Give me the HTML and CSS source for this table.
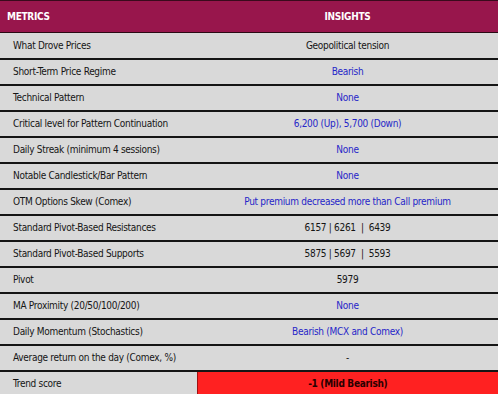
FILE: index.html
```html
<!DOCTYPE html>
<html>
<head>
<meta charset="utf-8">
<link rel="stylesheet" href="styles.css">
</head>
<body>
<table class="metrics">
  <thead>
    <tr><th class="label">METRICS</th><th class="value">INSIGHTS</th></tr>
  </thead>
  <tbody>
    <tr><td class="label">What Drove Prices</td><td class="value">Geopolitical tension</td></tr>
    <tr><td class="label">Short-Term Price Regime</td><td class="value blue">Bearish</td></tr>
    <tr><td class="label">Technical Pattern</td><td class="value blue">None</td></tr>
    <tr><td class="label">Critical level for Pattern Continuation</td><td class="value blue">6,200 (Up), 5,700 (Down)</td></tr>
    <tr><td class="label">Daily Streak (minimum 4 sessions)</td><td class="value blue">None</td></tr>
    <tr><td class="label">Notable Candlestick/Bar Pattern</td><td class="value blue">None</td></tr>
    <tr><td class="label">OTM Options Skew (Comex)</td><td class="value blue">Put premium decreased more than Call premium</td></tr>
    <tr><td class="label">Standard Pivot-Based Resistances</td><td class="value">6157 | 6261 &nbsp;| &nbsp;6439</td></tr>
    <tr><td class="label">Standard Pivot-Based Supports</td><td class="value">5875 | 5697 &nbsp;| &nbsp;5593</td></tr>
    <tr><td class="label">Pivot</td><td class="value">5979</td></tr>
    <tr><td class="label">MA Proximity (20/50/100/200)</td><td class="value blue">None</td></tr>
    <tr><td class="label">Daily Momentum (Stochastics)</td><td class="value blue">Bearish (MCX and Comex)</td></tr>
    <tr><td class="label">Average return on the day (Comex, %)</td><td class="value">-</td></tr>
    <tr><td class="label">Trend score</td><td class="value score">-1 (Mild Bearish)</td></tr>
  </tbody>
</table>
</body>
</html>
```
FILE: styles.css
```css
html, body {
  margin: 0;
  padding: 0;
  background: #ffffff;
}
body {
  font-family: "DejaVu Sans Condensed", "Liberation Sans", sans-serif;
  font-size: 10px;
  letter-spacing: -0.3px;
  color: #151515;
  overflow: hidden;
}
.metrics {
  width: 498px;
  border-collapse: collapse;
  table-layout: fixed;
}
.metrics th,
.metrics td {
  box-sizing: border-box;
  white-space: nowrap;
}
.metrics th {
  background: #98164c;
  color: #ffffff;
  font-weight: bold;
  height: 32px;
  padding: 0;
  border-top: 1px solid #3a0a1c;
  border-bottom: 1px solid #2a0a14;
}
.metrics th.label {
  width: 197px;
  text-align: left;
  padding-left: 7px;
}
.metrics th.value {
  text-align: center;
}
.metrics td {
  background: #d9d9d9;
  height: 26px;
  padding: 0;
  border-bottom: 2px solid #151515;
  vertical-align: middle;
}
.metrics td.label {
  padding-left: 13px;
}
.metrics td.value {
  text-align: center;
}
.metrics td.blue {
  color: #2626c8;
}
.metrics td.score {
  background: #ff2121;
  color: #2a0000;
  font-weight: bold;
  border-left: 1px solid #a01010;
}
```
